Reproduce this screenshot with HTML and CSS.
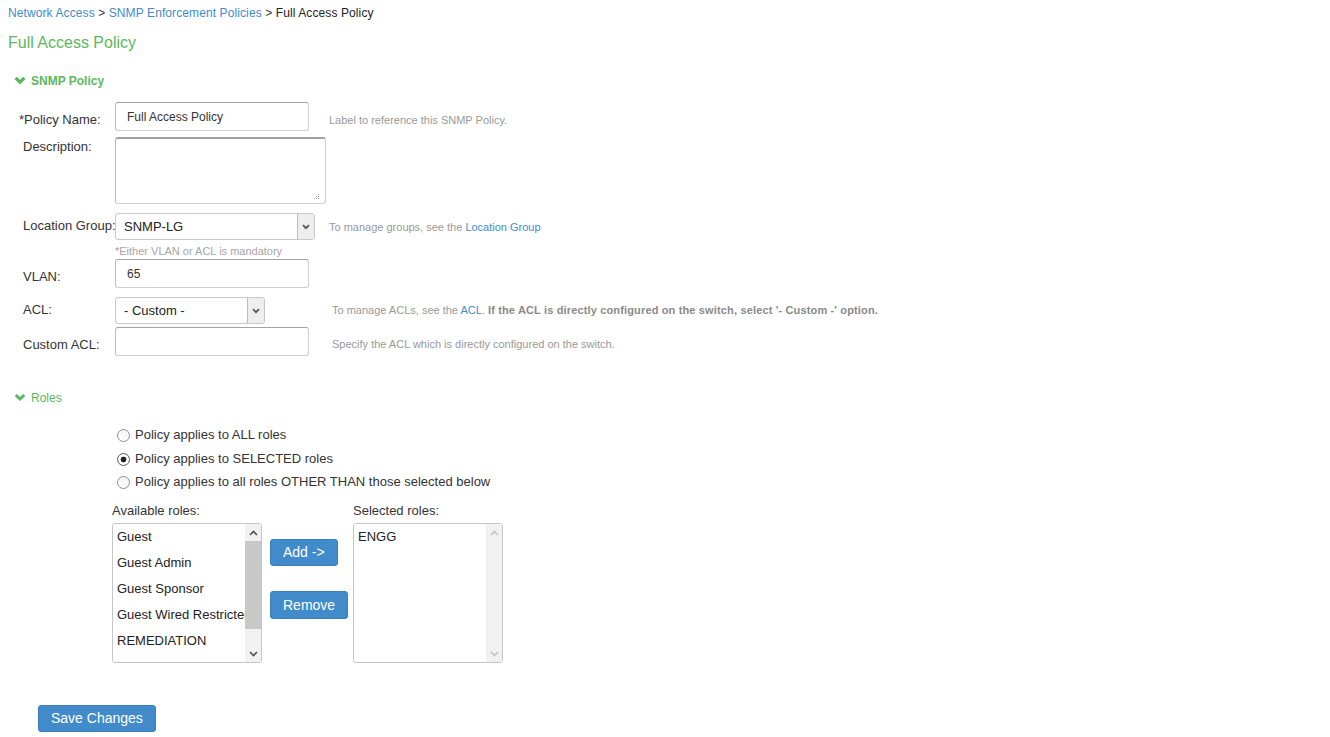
FILE: index.html
```html
<!DOCTYPE html>
<html>
<head>
<meta charset="utf-8">
<title>Full Access Policy</title>
<link rel="stylesheet" href="styles.css">
</head>
<body>
<div class="page">
  <div class="breadcrumb"><a href="#">Network Access</a> &gt; <a href="#">SNMP Enforcement Policies</a> &gt; <span class="current">Full Access Policy</span></div>
  <h1 class="title">Full Access Policy</h1>

  <div class="section-head bold">
    <svg class="chev" width="12" height="9" viewBox="0 0 12 9"><polyline points="1.6,1.8 6,6.2 10.4,1.8" fill="none" stroke="#5cb85c" stroke-width="3.2"/></svg>
    <span>SNMP Policy</span>
  </div>

  <div class="form">
    <div class="row r-name">
      <label class="lbl req">*Policy Name:</label>
      <div class="field"><input class="txt w193" type="text" value="Full Access Policy"></div>
      <div class="help">Label to reference this SNMP Policy.</div>
    </div>
    <div class="row r-desc">
      <label class="lbl">Description:</label>
      <div class="field area-wrap"><textarea class="area"></textarea><svg class="grip" width="7" height="7" viewBox="0 0 7 7"><rect x="5" y="1" width="1" height="1"/><rect x="3" y="3" width="1" height="1"/><rect x="5" y="3" width="1" height="1"/><rect x="1" y="5" width="1" height="1"/><rect x="3" y="5" width="1" height="1"/><rect x="5" y="5" width="1" height="1"/></svg></div>
    </div>
    <div class="row r-loc">
      <label class="lbl">Location Group:</label>
      <div class="field">
        <div class="sel w199"><span class="sel-text">SNMP-LG</span><span class="sel-btn"><svg width="8" height="6" viewBox="0 0 8 6"><polyline points="1,1.2 4,4.2 7,1.2" fill="none" stroke="#555" stroke-width="1.8"/></svg></span></div>
      </div>
      <div class="help">To manage groups, see the <a href="#">Location Group</a></div>
    </div>
    <div class="note">*Either VLAN or ACL is mandatory</div>
    <div class="row r-vlan">
      <label class="lbl">VLAN:</label>
      <div class="field"><input class="txt w193" type="text" value="65"></div>
    </div>
    <div class="row r-acl">
      <label class="lbl">ACL:</label>
      <div class="field">
        <div class="sel w149"><span class="sel-text">- Custom -</span><span class="sel-btn"><svg width="8" height="6" viewBox="0 0 8 6"><polyline points="1,1.2 4,4.2 7,1.2" fill="none" stroke="#555" stroke-width="1.8"/></svg></span></div>
      </div>
      <div class="help help-acl">To manage ACLs, see the <a href="#">ACL</a>. <b>If the ACL is directly configured on the switch, select '- Custom -' option.</b></div>
    </div>
    <div class="row r-cacl">
      <label class="lbl">Custom ACL:</label>
      <div class="field"><input class="txt w193" type="text" value=""></div>
      <div class="help help-acl">Specify the ACL which is directly configured on the switch.</div>
    </div>
  </div>

  <div class="section-head roles-head">
    <svg class="chev" width="12" height="9" viewBox="0 0 12 9"><polyline points="1.8,2 6,6 10.2,2" fill="none" stroke="#5cb85c" stroke-width="3"/></svg>
    <span>Roles</span>
  </div>

  <div class="radios">
    <label class="radio"><input type="radio" name="ap"> Policy applies to ALL roles</label>
    <label class="radio"><input type="radio" name="ap" checked> Policy applies to SELECTED roles</label>
    <label class="radio"><input type="radio" name="ap"> Policy applies to all roles OTHER THAN those selected below</label>
  </div>

  <div class="roles">
    <div class="role-col">
      <div class="role-lbl">Available roles:</div>
      <div class="listbox">
        <div class="items">
          <div class="item">Guest</div>
          <div class="item">Guest Admin</div>
          <div class="item">Guest Sponsor</div>
          <div class="item">Guest Wired Restricted</div>
          <div class="item">REMEDIATION</div>
        </div>
        <div class="sbar">
          <div class="sarrow"><svg width="9" height="6" viewBox="0 0 9 6"><polyline points="1,5 4.5,1.5 8,5" fill="none" stroke="#505050" stroke-width="1.6"/></svg></div>
          <div class="strack"><div class="thumb"></div></div>
          <div class="sarrow"><svg width="9" height="6" viewBox="0 0 9 6"><polyline points="1,1 4.5,4.5 8,1" fill="none" stroke="#505050" stroke-width="1.6"/></svg></div>
        </div>
      </div>
    </div>
    <div class="btn-col">
      <button class="btn btn-add" type="button">Add -&gt;</button>
      <button class="btn btn-remove" type="button">Remove</button>
    </div>
    <div class="role-col">
      <div class="role-lbl">Selected roles:</div>
      <div class="listbox">
        <div class="items">
          <div class="item">ENGG</div>
        </div>
        <div class="sbar disabled">
          <div class="sarrow"><svg width="9" height="6" viewBox="0 0 9 6"><polyline points="1,5 4.5,1.5 8,5" fill="none" stroke="#c4c4c4" stroke-width="1.6"/></svg></div>
          <div class="strack"></div>
          <div class="sarrow"><svg width="9" height="6" viewBox="0 0 9 6"><polyline points="1,1 4.5,4.5 8,1" fill="none" stroke="#c4c4c4" stroke-width="1.6"/></svg></div>
        </div>
      </div>
    </div>
  </div>

  <div class="actions">
    <button class="btn btn-save" type="button">Save Changes</button>
  </div>
</div>
</body>
</html>
```

FILE: styles.css
```css
html, body {
  margin: 0;
  padding: 0;
  background: #fff;
}
body {
  font-family: "Liberation Sans", Arial, sans-serif;
  color: #333;
}
.page {
  padding: 6px 8px 0 8px;
}
a {
  color: #428bca;
  text-decoration: none;
}
.breadcrumb {
  font-size: 12px;
  line-height: 14px;
  color: #333;
  letter-spacing: 0.1px;
}
.breadcrumb .current {
  color: #222;
}
.title {
  margin: 13px 0 0 0;
  font-size: 16px;
  line-height: 20px;
  font-weight: normal;
  color: #5cb85c;
}
.section-head {
  display: flex;
  align-items: center;
  margin-top: 21px;
  padding-left: 6px;
  font-size: 12px;
  line-height: 14px;
  color: #5cb85c;
}
.section-head.bold {
  font-weight: bold;
}
.section-head .chev {
  margin-right: 5px;
  margin-top: -1px;
}
.roles-head {
  margin-top: 35px;
}
.form {
  margin-top: 14px;
  padding-left: 15px;
}
.row {
  display: flex;
  align-items: flex-start;
}
.lbl {
  width: 92px;
  flex: none;
  font-size: 13px;
  line-height: 15px;
  color: #333;
  white-space: nowrap;
}
.lbl.req {
  margin-left: -4px;
  width: 96px;
}
.field {
  width: 214px;
  flex: none;
}
.help {
  font-size: 11px;
  line-height: 13px;
  color: #999;
  white-space: nowrap;
}
.help b {
  color: #8a8a8a;
  letter-spacing: 0.15px;
}
.help-acl {
  margin-left: 3px;
}
.txt {
  box-sizing: border-box;
  height: 29px;
  border: 1px solid #cfcfcf;
  border-top-color: #a3a3a3;
  border-left-color: #bdbdbd;
  border-radius: 3px;
  padding: 0 11px;
  font-family: "Liberation Sans", Arial, sans-serif;
  font-size: 12px;
  color: #333;
  margin: 0;
  display: block;
  outline: none;
}
.w193 { width: 194px; }
.area-wrap {
  position: relative;
}
.area {
  box-sizing: border-box;
  display: block;
  width: 211px;
  height: 67px;
  margin: 0;
  border: 1px solid #d0d0d0;
  border-top: 2px solid #a0a0a0;
  border-left-color: #b8b8b8;
  border-radius: 3px;
  font-family: "Liberation Sans", Arial, sans-serif;
  font-size: 12px;
  outline: none;
  resize: none;
}
.grip {
  position: absolute;
  left: 198px;
  top: 56px;
  fill: #9a9a9a;
}
.sel {
  box-sizing: border-box;
  height: 27px;
  display: flex;
  align-items: stretch;
  border: 1px solid #c8c8c8;
  border-radius: 3px;
  background: #fff;
}
.w199 { width: 200px; }
.w149 { width: 150px; }
.sel-text {
  flex: 1;
  padding-left: 8px;
  font-size: 13px;
  line-height: 25px;
  color: #222;
}
.sel-btn {
  width: 16px;
  flex: none;
  display: flex;
  align-items: center;
  justify-content: center;
  background: #eeeeee;
  border-left: 1px solid #bdbdbd;
  border-radius: 0 2px 2px 0;
}
.r-name .lbl { padding-top: 10px; }
.r-name .help { padding-top: 12px; }
.r-desc { margin-top: 6px; }
.r-desc .lbl { padding-top: 2px; }
.r-loc { margin-top: 9px; }
.r-loc .lbl { padding-top: 5px; }
.r-loc .help { padding-top: 8px; }
.note {
  margin: 5px 0 0 92px;
  font-size: 11px;
  line-height: 13px;
  color: #a5a5a5;
}
.r-vlan { margin-top: 1px; }
.r-vlan .lbl { padding-top: 10px; }
.r-acl { margin-top: 9px; }
.r-acl .lbl { padding-top: 5px; }
.r-acl .help { padding-top: 7px; }
.r-cacl { margin-top: 3px; }
.r-cacl .lbl { padding-top: 10px; }
.r-cacl .help { padding-top: 11px; }

.radios {
  margin-top: 17px;
  padding-left: 109px;
  display: flex;
  flex-direction: column;
}
.radio {
  display: flex;
  align-items: center;
  height: 24px;
  font-size: 13px;
  color: #333;
}
.radio:last-child { height: 23px; }
.radio input {
  -webkit-appearance: none;
  appearance: none;
  box-sizing: border-box;
  width: 13px;
  height: 13px;
  margin: 2px 5px 0 0;
  border: 1px solid #8f8f8f;
  border-radius: 50%;
  background: linear-gradient(#f4f4f4, #ffffff);
}
.radio input:checked {
  background: radial-gradient(circle, #222 0, #222 2.6px, #fff 3.2px, #fff 100%);
  border-color: #5a5a5a;
}

.roles {
  display: flex;
  align-items: flex-start;
  margin-top: 10px;
  padding-left: 104px;
}
.role-col {
  width: 150px;
  flex: none;
}
.role-lbl {
  font-size: 13px;
  line-height: 15px;
  color: #333;
}
.listbox {
  box-sizing: border-box;
  margin-top: 5px;
  width: 150px;
  height: 140px;
  border: 1px solid #c6c6c6;
  border-radius: 3px;
  display: flex;
  overflow: hidden;
}
.items {
  flex: 1;
  overflow: hidden;
  padding-left: 4px;
}
.item {
  font-size: 13px;
  line-height: 26px;
  white-space: nowrap;
  color: #222;
}
.sbar {
  width: 16px;
  flex: none;
  display: flex;
  flex-direction: column;
  background: #f1f1f1;
}
.sarrow {
  height: 17px;
  flex: none;
  display: flex;
  align-items: center;
  justify-content: center;
}
.strack {
  flex: 1;
  display: flex;
  flex-direction: column;
}
.thumb {
  height: 88px;
  background: #c8c8c8;
}
.btn-col {
  width: 83px;
  flex: none;
  margin-left: 8px;
  display: flex;
  flex-direction: column;
  align-items: flex-start;
  padding-top: 36px;
}
.btn {
  box-sizing: border-box;
  height: 27px;
  padding: 0 12px;
  border: 1px solid #3b7fc0;
  border-radius: 3px;
  background: #428bca;
  color: #fff;
  font-family: "Liberation Sans", Arial, sans-serif;
  font-size: 14px;
  line-height: 25px;
  cursor: pointer;
}
.btn-remove {
  margin-top: 25px;
  height: 28px;
}
.actions {
  margin-top: 42px;
  padding-left: 30px;
}
```
